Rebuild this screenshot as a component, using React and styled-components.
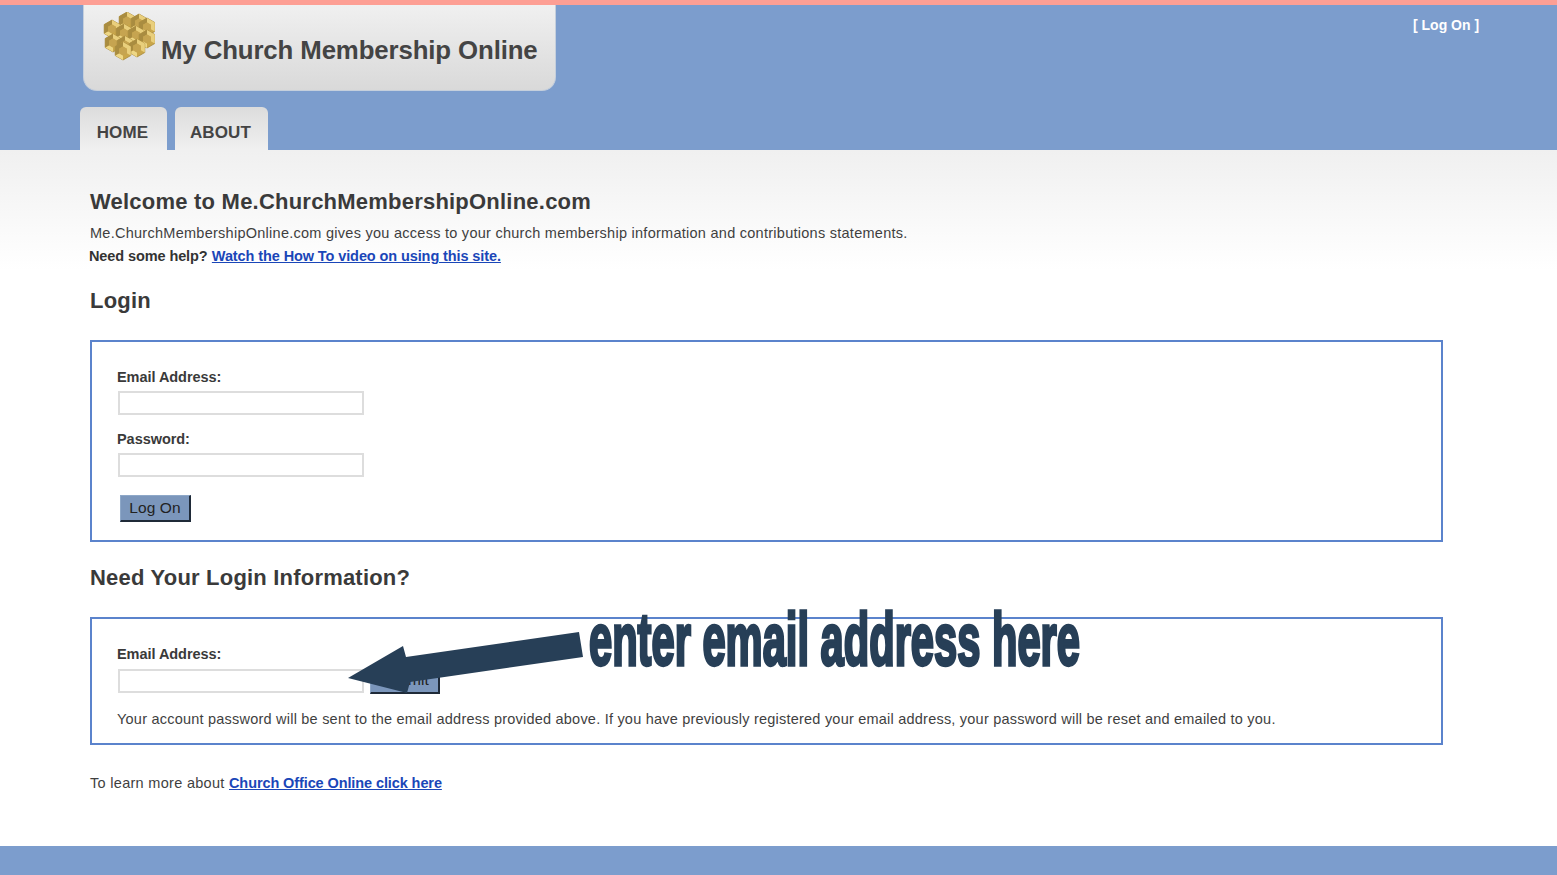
import React from "react";
import styled, { createGlobalStyle } from "styled-components";

const Global = createGlobalStyle`
  html, body { margin: 0; padding: 0; background: #fff; }
  body { font-family: "Liberation Sans", Arial, sans-serif; color: #3a3a3a; }
`;
const Page = styled.div`
  position: relative;
  width: 1557px;
  height: 875px;
  overflow: hidden;
  display: flex;
  flex-direction: column;
`;
const TopStripe = styled.div`
  height: 5px;
  background: #fd9f94;
`;
const Header = styled.header`
  height: 145px;
  background: #7c9dcd;
  padding-left: 80px;
  display: flex;
  flex-direction: column;
  position: relative;
`;
const LogoCard = styled.div`
  margin-left: 3px;
  width: 473px;
  height: 86px;
  box-sizing: border-box;
  padding: 7px 0 0 19px;
  display: flex;
  gap: 6px;
  background: linear-gradient(#f0f0f0, #d9d9d9);
  border: solid #c5cfdc;
  border-width: 0 1px 1px 1px;
  border-radius: 0 0 14px 14px;
`;
const LogoText = styled.div`
  font-size: 25.8px;
  font-weight: bold;
  color: #444;
  margin-top: 23px;
  letter-spacing: -0.12px;
  line-height: 30px;
  white-space: nowrap;
`;
const Tabs = styled.nav`
  display: flex;
  gap: 8px;
  margin-top: 16px;
`;
const Tab = styled.a`
  width: ${(p) => p.$w}px;
  height: 43px;
  box-sizing: border-box;
  background: linear-gradient(#dcdcdc, #f0f0f0);
  border-radius: 6px 6px 0 0;
  font-size: 17px;
  font-weight: bold;
  color: #444;
  display: flex;
  justify-content: center;
  padding: 16px 2px 0 0;
  line-height: 20px;
  letter-spacing: 0.15px;
`;
const LogOn = styled.a`
  position: absolute;
  top: 12px;
  left: 1413px;
  font-size: 14px;
  font-weight: bold;
  color: #fff;
  line-height: 17px;
  white-space: nowrap;
`;
const Main = styled.main`
  flex: 1;
  padding: 37px 0 0 90px;
  background: linear-gradient(#f0f0f0 0, #fff 120px);
`;
const Title = styled.h1`
  margin: 0;
  font-size: 22px;
  line-height: 30px;
  font-weight: bold;
  letter-spacing: 0.22px;
  color: #3a3a3a;
`;
const Para = styled.p`
  margin: 5px 0 0;
  font-size: 14.5px;
  line-height: 23px;
  color: #3f3f3f;
  letter-spacing: 0.265px;
`;
const Strong = styled.b`
  color: #333;
  letter-spacing: -0.1px;
  margin-left: -1px;
`;
const Link = styled.a`
  color: #1a46b8;
  font-weight: bold;
  text-decoration: underline;
  letter-spacing: -0.1px;
`;
const Section = styled.h2`
  margin: ${(p) => p.$top}px 0 0;
  font-size: 22px;
  line-height: 28px;
  font-weight: bold;
  letter-spacing: 0.2px;
  color: #3a3a3a;
`;
const Box = styled.section`
  width: 1353px;
  height: ${(p) => p.$h}px;
  margin-top: ${(p) => p.$top}px;
  box-sizing: border-box;
  border: 2px solid #5b83cc;
  padding: ${(p) => p.$pad}px 0 0 25px;
`;
const Label = styled.label`
  display: block;
  font-size: 14.5px;
  line-height: 18px;
  font-weight: bold;
  color: #3a3a3a;
  letter-spacing: -0.05px;
`;
const Input = styled.input`
  display: block;
  width: 246px;
  height: 24px;
  box-sizing: border-box;
  margin: 5px 0 1px 1px;
  padding: 0;
  background: #fff;
  border: 2px solid #ddd;
  outline: none;
`;
const Gap = styled.div`
  height: 14px;
`;
const Inline = styled.div`
  display: flex;
  align-items: flex-end;
  gap: 6px;
  margin-top: 1px;
`;
const Button = styled.button`
  display: block;
  width: ${(p) => p.$w}px;
  height: 27px;
  box-sizing: border-box;
  margin: ${(p) => p.$m};
  padding: 0;
  background: #7b96bb;
  border: solid;
  border-color: #8ea8c8 #1f2a38 #1f2a38 #8ea8c8;
  border-width: 1px 2px 2px 1px;
  font-family: "Liberation Sans", Arial, sans-serif;
  font-size: 15.5px;
  color: #222;
  letter-spacing: 0.1px;
`;
const Note = styled.p`
  margin: 16px 0 0 0;
  font-size: 14.5px;
  line-height: 18px;
  color: #3f3f3f;
  letter-spacing: 0.22px;
  white-space: nowrap;
`;
const Learn = styled.p`
  margin: 28px 0 0;
  font-size: 14.5px;
  line-height: 20px;
  color: #3f3f3f;
  letter-spacing: 0.3px;
`;
const Footer = styled.footer`
  height: 29px;
  background: #7c9dcd;
`;
const Callout = styled.div`
  position: absolute;
  left: 589px;
  top: 592px;
  font-size: 74px;
  line-height: 96px;
  font-weight: bold;
  color: #273f57;
  -webkit-text-stroke: 3.4px #273f57;
  white-space: nowrap;
  transform-origin: 0 0;
  transform: scaleX(0.563);
`;
const Arrow = styled.svg`
  position: absolute;
  left: 345px;
  top: 628px;
`;
const Honey = styled.svg`
  flex: none;
`;

const centers = [
  [24, 9], [36, 11], [9, 17], [44, 15], [21, 21], [33, 23],
  [44, 27], [10, 31], [22, 33], [34, 36], [20, 39],
];
function Hex({ x, y }) {
  const r = 9;
  const pts = [...Array(6)].map((_, i) => {
    const a = (Math.PI / 3) * i + Math.PI / 2;
    return [x + r * Math.cos(a), y + r * Math.sin(a)];
  });
  const inner = pts.map(([px, py]) => [x + (px - x) * 0.5, y + (py - y) * 0.5]);
  const s = (p) => p.map((q) => q.join(",")).join(" ");
  return (
    <g>
      <polygon points={s(pts)} fill="#c9a64a" stroke="#a88a3c" strokeWidth="0.8" />
      <polygon points={s([pts[3], pts[4], pts[5], inner[5], inner[4], inner[3]])} fill="#e9cf7c" />
      <polygon points={s([pts[0], pts[1], inner[1], inner[0]])} fill="#eed785" />
      <polygon points={s([pts[1], pts[2], pts[3], inner[3], inner[2], inner[1]])} fill="#a98c40" />
      <polygon points={s(inner)} fill="#c6a450" />
    </g>
  );
}

export default function App() {
  return (
    <Page>
      <Global />
      <TopStripe />
      <Header>
        <LogoCard>
          <Honey width="52" height="50" viewBox="0 0 52 50">
            {centers.map(([x, y]) => (
              <Hex key={`${x}-${y}`} x={x} y={y} />
            ))}
          </Honey>
          <LogoText>My Church Membership Online</LogoText>
        </LogoCard>
        <Tabs>
          <Tab $w={87}>HOME</Tab>
          <Tab $w={93}>ABOUT</Tab>
        </Tabs>
        <LogOn>[ Log On ]</LogOn>
      </Header>
      <Main>
        <Title>Welcome to Me.ChurchMembershipOnline.com</Title>
        <Para>
          Me.ChurchMembershipOnline.com gives you access to your church membership information and contributions statements.
          <br />
          <Strong>Need some help?</Strong> <Link>Watch the How To video on using this site.</Link>
        </Para>
        <Section $top={19}>Login</Section>
        <Box $h={202} $top={25} $pad={26}>
          <Label>Email Address:</Label>
          <Input />
          <Gap />
          <Label>Password:</Label>
          <Input />
          <Button $w={71} $m="18px 0 0 3px">Log On</Button>
        </Box>
        <Section $top={22}>Need Your Login Information?</Section>
        <Box $h={128} $top={25} $pad={26}>
          <Label>Email Address:</Label>
          <Inline>
            <Input />
            <Button $w={70} $m="0">Submit</Button>
          </Inline>
          <Note>
            Your account password will be sent to the email address provided above. If you have previously registered your email address, your password will be reset and emailed to you.
          </Note>
        </Box>
        <Learn>
          To learn more about <Link>Church Office Online click here</Link>
        </Learn>
      </Main>
      <Footer />
      <Arrow width="240" height="70" viewBox="0 0 240 70">
        <polygon points="3,50 58,18 61,29 234,4 238,29 65,54 62,65" fill="#273f57" />
      </Arrow>
      <Callout>enter email address here</Callout>
    </Page>
  );
}
